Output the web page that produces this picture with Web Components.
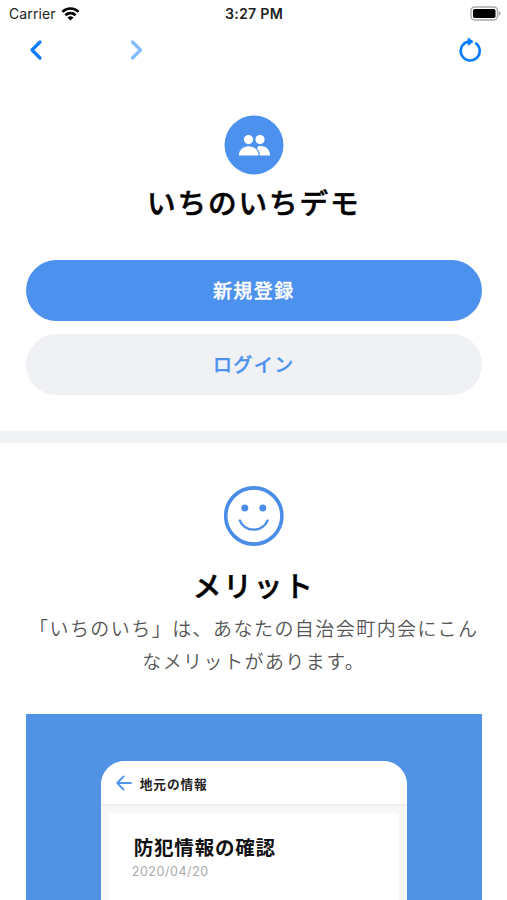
<!DOCTYPE html>
<html lang="ja">
<head>
<meta charset="utf-8">
<meta name="viewport" content="width=device-width, initial-scale=1">
<title>いちのいちデモ</title>
<style>
body {
    margin: 0;
    height: 900px;
    overflow: hidden;
    background: #fff;
    color: #000;
    font-family: "Noto Sans CJK JP", sans-serif;
    --blue: #4d91ef;
    --ios-blue: #087bff;
    --grey: #eff1f5;
}
</style>
</head>
<body>
<app-screen>
    <status-bar slot="top" carrier="Carrier" time="3:27 PM"></status-bar>
    <browser-nav slot="top"></browser-nav>
    <welcome-section>
        <span slot="title">いちのいちデモ</span>
        <pill-button class="primary">新規登録</pill-button>
        <pill-button>ログイン</pill-button>
    </welcome-section>
    <merit-section>
        <span slot="title">メリット</span>
        <span slot="text">「いちのいち」は、あなたの自治会町内会にこんなメリットがあります。</span>
        <phone-preview>
            <span slot="bar">地元の情報</span>
            <span slot="heading">防犯情報の確認</span>
            <span slot="date">2020/04/20</span>
        </phone-preview>
    </merit-section>
</app-screen>

<script>
// attach an open shadow root with the given markup
class BaseElement extends HTMLElement {
    constructor() {
        super()
        const template = document.createElement('template')
        template.innerHTML = this.constructor.markup
        this.attachShadow({ mode: 'open' })
        this.shadowRoot.appendChild(template.content.cloneNode(true))
    }
}

class AppScreen extends BaseElement {
    static markup = `
<style>
:host {
    display: flex;
    flex-direction: column;
    height: 900px;
    overflow: hidden;
}
</style>
<slot name="top"></slot>
<slot></slot>
`
}
customElements.define('app-screen', AppScreen)

// carrier, clock and battery
class StatusBar extends BaseElement {
    static markup = `
<style>
:host {
    display: grid;
    grid-template-columns: 1fr auto 1fr;
    align-items: center;
    flex: none;
    height: 27px;
    padding: 0 6px 0 9px;
    box-sizing: border-box;
    font-family: Inter, sans-serif;
    font-size: 14px;
    line-height: 27px;
    color: #222;
}
.left { display: flex; align-items: center; gap: 5px; }
.carrier { letter-spacing: .1px; }
.time { font-size: 14.2px; font-weight: 600; letter-spacing: .25px; margin-right: 2px; }
.battery { justify-self: end; }
svg { display: block; }
</style>
<div class="left">
    <span class="carrier"></span>
    <svg width="19" height="14" viewBox="0 0 18 14" fill="none" stroke="#000" stroke-width="2.6">
        <path d="M.9 4.9a11.5 11.5 0 0 1 16.2 0M3.9 8.2a7.3 7.3 0 0 1 10.2 0"/>
        <path d="M9 13.5L6 10.6a4.3 4.3 0 0 1 6 0z" fill="#000" stroke="none"/>
    </svg>
</div>
<span class="time"></span>
<svg class="battery" width="31" height="15" viewBox="0 0 31 15">
    <rect x="1" y="1" width="26.5" height="13" rx="3.8" fill="#fff" stroke="#aaa" stroke-width="1.4"/>
    <rect x="3" y="3" width="22.5" height="9" rx="1.8"/>
    <path d="M28.7 5.1q2.1.8 2.1 2.4t-2.1 2.4z" fill="#aaa"/>
</svg>
`
    connectedCallback() {
        this.shadowRoot.querySelector('.carrier').textContent = this.getAttribute('carrier')
        this.shadowRoot.querySelector('.time').textContent = this.getAttribute('time')
    }
}
customElements.define('status-bar', StatusBar)

// back, forward and reload
class BrowserNav extends BaseElement {
    static markup = `
<style>
:host {
    display: flex;
    align-items: center;
    flex: none;
    height: 46px;
    padding: 0 24px 0 28px;
    color: var(--ios-blue);
}
svg { display: block; fill: none; stroke: currentColor; }
.forward { margin-left: 84px; opacity: .5; }
.reload { margin-left: auto; }
</style>
<svg width="16" height="22" viewBox="0 0 16 22" stroke-width="3.2" stroke-linecap="round" stroke-linejoin="round">
    <path d="M12 3L4 11l8 8"/>
</svg>
<svg class="forward" width="16" height="22" viewBox="0 0 16 22" stroke-width="3.2" stroke-linecap="round" stroke-linejoin="round">
    <path d="M4.5 3l8 8-8 8"/>
</svg>
<svg class="reload" width="26" height="28" viewBox="0 0 26 28" stroke-width="2.6" stroke-linecap="round">
    <path d="M11.5 5.6a9.5 9.5 0 1 0 7.600 1.900"/>
    <path d="M11.500 2.300l4.600 3.300-4.600 3.400z" fill="currentColor" stroke-width="1" stroke-linejoin="round"/>
</svg>
`
}
customElements.define('browser-nav', BrowserNav)

class PillButton extends BaseElement {
    static markup = `
<style>
:host {
    display: block;
}
button {
    display: block;
    width: 100%;
    height: 61px;
    border: 0;
    padding: 0 0 1px;
    border-radius: 31px;
    background: var(--grey);
    color: var(--blue);
    font: 500 19px/60px "Noto Sans CJK JP", sans-serif;
    letter-spacing: 1.4px;
    -webkit-text-stroke: .3px currentColor;
}
:host(.primary) button {
    background: var(--blue);
    color: #fff;
}
</style>
<button><slot></slot></button>
`
}
customElements.define('pill-button', PillButton)

class WelcomeSection extends BaseElement {
    static markup = `
<style>
:host {
    display: flex;
    flex-direction: column;
    align-items: center;
    flex: none;
    height: 370px;
    padding: 42px 25.5px 0 26px;
    box-sizing: border-box;
    border-bottom: 12px solid #f1f2f5;
}
svg { display: block; flex: none; }
h1 {
    margin: 6px 0 37px;
    font-size: 28.6px;
    line-height: 42px;
    font-weight: 500;
    letter-spacing: 1.9px;
    -webkit-text-stroke: .5px currentColor;
}
.actions {
    display: flex;
    flex-direction: column;
    gap: 12.5px;
    width: 100%;
}
</style>
<svg width="60" height="60" viewBox="0 0 60 60">
    <circle cx="30" cy="30" r="29.5" fill="#4d91ef"/>
    <g fill="#fff">
        <circle cx="36" cy="24.6" r="4.6"/>
        <path d="M34 31.2c7.5-1.3 12 3.2 12 9.300H30z"/>
        <g stroke="#4d91ef" stroke-width="1.2">
            <circle cx="24.5" cy="24.6" r="5.2"/>
            <path d="M14.2 41c0-6.5 4.3-10.400 10.300-10.400S35.300 34.500 35.300 41z"/>
        </g>
    </g>
</svg>
<h1><slot name="title"></slot></h1>
<div class="actions"><slot></slot></div>
`
}
customElements.define('welcome-section', WelcomeSection)

class MeritSection extends BaseElement {
    static markup = `
<style>
:host {
    display: flex;
    flex-direction: column;
    align-items: center;
    flex: 1;
    min-height: 0;
    padding: 43px 25.5px 0 26px;
    text-align: center;
}
svg { display: block; flex: none; }
h2 {
    margin: 18px 0 5px;
    font-size: 28.6px;
    line-height: 42px;
    font-weight: 500;
    letter-spacing: 1.9px;
    -webkit-text-stroke: .5px currentColor;
}
p {
    margin: 0 0 37px;
    color: #555;
    font-size: 19px;
    line-height: 33px;
    letter-spacing: 1.45px;
    font-weight: 350;
}
</style>
<svg width="60" height="60" viewBox="0 0 60 60" fill="none" stroke="#4a8de8">
    <circle cx="29.8" cy="30" r="28.1" stroke-width="3.6"/>
    <path d="M15.8 34.500c5.400 12.200 22.200 12.200 27.800 0" stroke-width="2.300" stroke-linecap="round"/>
    <g fill="#4a8de8" stroke="none">
        <circle cx="20.800" cy="21.900" r="3.500"/>
        <circle cx="38.800" cy="21.900" r="3.500"/>
    </g>
</svg>
<h2><slot name="title"></slot></h2>
<p><slot name="text"></slot></p>
<slot></slot>
`
}
customElements.define('merit-section', MeritSection)

// phone mockup on a blue panel, cut off by the bottom of the screen
class PhonePreview extends BaseElement {
    static markup = `
<style>
:host {
    display: flex;
    justify-content: center;
    width: 100%;
    flex: 1;
    padding: 47px 0 0;
    box-sizing: border-box;
    background: #5292e5;
    text-align: left;
}
.phone {
    display: flex;
    flex-direction: column;
    width: 306px;
    border-radius: 24px 24px 0 0;
    overflow: hidden;
    background: #f7f7f7;
}
header {
    display: flex;
    align-items: center;
    gap: 8px;
    height: 45px;
    padding: 1px 0 0 15px;
    box-sizing: border-box;
    background: #fff;
    border-bottom: 2px solid #ededed;
    font-size: 12.7px;
    font-weight: 700;
    letter-spacing: .9px;
    color: #222;
}
.card {
    flex: 1;
    margin: 7px 8px 0;
    padding: 20px 25px 0 24px;
    border-radius: 3px 3px 0 0;
    background: #fff;
}
h3 {
    margin: 0 0 0 1px;
    font-size: 19.5px;
    line-height: 28px;
    font-weight: 700;
    letter-spacing: .8px;
    color: #111;
}
time {
    display: block;
    font-family: Inter, sans-serif;
    font-size: 12.5px;
    line-height: 21px;
    letter-spacing: .55px;
    margin-left: -1px;
    color: #aaa;
}
</style>
<div class="phone">
    <header>
        <svg width="16" height="16" viewBox="0 0 16 16" fill="none" stroke="#4f94f2" stroke-width="1.8" stroke-linecap="round" stroke-linejoin="round">
            <path d="M15 8H1.2M7.5 1.5L1.2 8l6.3 6.5"/>
        </svg>
        <slot name="bar"></slot>
    </header>
    <div class="card">
        <h3><slot name="heading"></slot></h3>
        <time><slot name="date"></slot></time>
    </div>
</div>
`
}
customElements.define('phone-preview', PhonePreview)
</script>
</body>
</html>
